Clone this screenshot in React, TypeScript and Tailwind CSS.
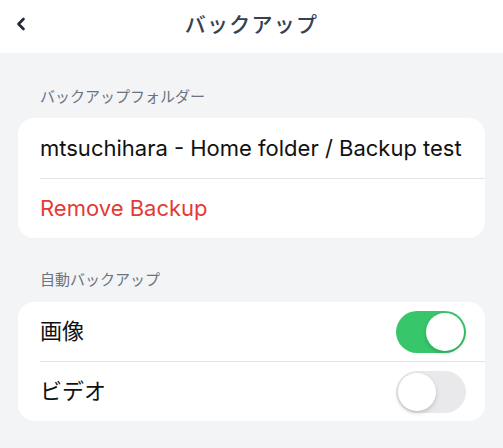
import React from "react";

function Toggle({ on }: { on: boolean }) {
  return (
    <div
      className={
        "relative h-[42px] w-[70px] rounded-full " +
        (on ? "bg-[#37c76a]" : "bg-[#e9e9eb]")
      }
    >
      <div
        className={
          "absolute top-[2px] h-[38px] w-[38px] rounded-full bg-white shadow-[0_2px_4px_rgba(0,0,0,0.18)] " +
          (on ? "left-[30px]" : "left-[2px]")
        }
      />
    </div>
  );
}

export default function App() {
  return (
    <div className="h-[448px] w-[503px] bg-[#f3f4f6] font-['Inter','Noto_Sans_CJK_JP',sans-serif]">
      <div className="relative flex h-[53px] items-center justify-center bg-white pb-[4px]">
        <svg
          className="absolute left-[15px] top-[17px]"
          width="12"
          height="14"
          viewBox="0 0 12 14"
          fill="none"
        >
          <path d="M8.5 2 L3.5 7 L8.5 12" stroke="#1f2937" strokeWidth="2.6" strokeLinecap="round" strokeLinejoin="round" />
        </svg>
        <span className="text-[21px] font-medium tracking-[0.06em] text-[#374151]">バックアップ</span>
      </div>

      <div className="px-[18px]">
        <div className="pl-[22px] pt-[34px] pb-[11px] text-[15px] leading-[20px] text-[#6b7280]">
          バックアップフォルダー
        </div>
        <div className="overflow-hidden rounded-[16px] bg-white">
          <div className="flex h-[60px] items-center pl-[22px] text-[22px] text-[#111111]">
            mtsuchihara - Home folder / Backup test
          </div>
          <div className="ml-[22px] h-px bg-[#e5e5e5]" />
          <div className="flex h-[59px] items-center pl-[22px] text-[22px] text-[#e53935]">
            Remove Backup
          </div>
        </div>

        <div className="pl-[22px] pt-[32px] pb-[12px] text-[15px] leading-[20px] text-[#6b7280]">
          自動バックアップ
        </div>
        <div className="overflow-hidden rounded-[16px] bg-white">
          <div className="flex h-[59px] items-center justify-between pl-[22px] pr-[19px] text-[22px] text-[#111111]">
            <span>画像</span>
            <Toggle on={true} />
          </div>
          <div className="ml-[22px] h-px bg-[#e5e5e5]" />
          <div className="flex h-[59px] items-center justify-between pl-[22px] pr-[19px] text-[22px] text-[#111111]">
            <span>ビデオ</span>
            <Toggle on={false} />
          </div>
        </div>
      </div>
    </div>
  );
}
